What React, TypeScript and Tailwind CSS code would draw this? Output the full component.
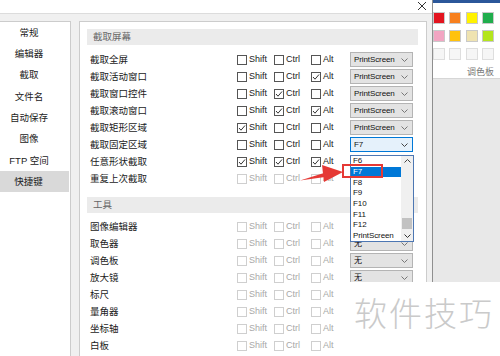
import React from 'react';

type Row = { label: string; checks: [boolean, boolean, boolean]; key: string; disabled?: boolean; focused?: boolean; hidden?: boolean };

const captureRows: Row[] = [
  { label: '截取全屏', checks: [false, false, false], key: 'PrintScreen' },
  { label: '截取活动窗口', checks: [false, false, true], key: 'PrintScreen' },
  { label: '截取窗口控件', checks: [false, true, false], key: 'PrintScreen' },
  { label: '截取滚动窗口', checks: [false, true, true], key: 'PrintScreen' },
  { label: '截取矩形区域', checks: [true, false, false], key: 'PrintScreen' },
  { label: '截取固定区域', checks: [false, false, false], key: 'F7', focused: true },
  // 下拉框被弹出列表挡住
  { label: '任意形状截取', checks: [true, true, true], key: '', hidden: true },
  { label: '重复上次截取', checks: [false, false, false], key: '', disabled: true, hidden: true },
];

const toolRows = ['图像编辑器', '取色器', '调色板', '放大镜', '标尺', '量角器', '坐标轴', '白板'];

const navItems = ['常规', '编辑器', '截取', '文件名', '自动保存', '图像', 'FTP 空间', '快捷键'];

const listItems = ['F6', 'F7', 'F8', 'F9', 'F10', 'F11', 'F12', 'PrintScreen'];

const swatches = [
  '#e3141f', '#f7801e', '#fff200', '#20ad4c',
  '#f2a5c2', '#ffc20e', '#efe3b1', '#b4e51d',
  '', '', '', '',
];

function Chevron({ up, color = '#666' }: { up?: boolean; color?: string }) {
  return (
    <svg width="7" height="4" viewBox="0 0 7 4" className="shrink-0">
      <polyline
        points={up ? '0.5,3.5 3.5,0.5 6.5,3.5' : '0.5,0.5 3.5,3.5 6.5,0.5'}
        fill="none"
        stroke={color}
        strokeWidth="1"
      />
    </svg>
  );
}

function Check({ checked, disabled, label, w }: { checked: boolean; disabled?: boolean; label: string; w: string }) {
  return (
    <div className={`${w} flex items-center gap-[2px]`}>
      <span
        className={`w-[10px] h-[10px] border bg-white flex items-center justify-center ${
          disabled ? 'border-[#cfcfcf]' : 'border-[#555]'
        }`}
      >
        {checked && (
          <svg width="8" height="8" viewBox="0 0 8 8">
            <polyline points="1,4 3,6.2 7,1.5" fill="none" stroke="#333" strokeWidth="1" />
          </svg>
        )}
      </span>
      <span className={`text-[9px] leading-none ${disabled ? 'text-[#a8a8a8]' : 'text-[#222]'}`}>{label}</span>
    </div>
  );
}

function Select({ value, focused, hidden }: { value: string; focused?: boolean; hidden?: boolean }) {
  if (hidden) return <div className="w-[63px] h-[15px]" />;
  return (
    <div
      className={`w-[63px] h-[15px] border flex items-center justify-between pl-[3px] pr-[4px] ${
        focused ? 'border-[#0078d7] bg-[#e5f1fb]' : 'border-[#b4b4b4] bg-[#e3e3e3]'
      }`}
    >
      <span className="text-[8px] tracking-[-0.1px] leading-none text-[#111]">{value}</span>
      <Chevron color={focused ? '#444' : '#777'} />
    </div>
  );
}

function HotkeyRow({ row }: { row: Row }) {
  return (
    <div className="h-[17px] flex items-center">
      <div className="w-[150px] pl-[3px] text-[9.5px] leading-none text-[#1a1a1a]">{row.label}</div>
      <Check w="w-[37px]" checked={row.checks[0]} disabled={row.disabled} label="Shift" />
      <Check w="w-[37px]" checked={row.checks[1]} disabled={row.disabled} label="Ctrl" />
      <Check w="w-[39px]" checked={row.checks[2]} disabled={row.disabled} label="Alt" />
      <Select value={row.key} focused={row.focused} hidden={row.hidden} />
    </div>
  );
}

function SectionTitle({ children }: { children: React.ReactNode }) {
  return (
    <div className="h-[16px] bg-[#ebebeb] pl-[6px] flex items-center text-[9.5px] leading-none text-[#666]">
      {children}
    </div>
  );
}

export default function App() {
  return (
    <div className="relative w-[500px] h-[356px] overflow-hidden flex bg-white font-['Liberation_Sans','Noto_Sans_CJK_SC',sans-serif]">
      {/* 设置对话框 */}
      <div className="w-[433px] flex flex-col bg-[#f0f0f0] border-r border-[#8f8f8f]">
        <div className="h-[14px] bg-white border-b border-[#dcdcdc] flex justify-end pr-[5px] pt-[1px]">
          <svg width="10" height="10" viewBox="0 0 10 10">
            <path d="M1 1 L9 9 M9 1 L1 9" stroke="#333" strokeWidth="1" />
          </svg>
        </div>
        <div className="flex flex-1 pt-[7px] pr-[5px]">
          <nav className="w-[71px] bg-white border-t border-r border-[#cccccc]">
            {navItems.map((n) => (
              <div
                key={n}
                className={`h-[21.3px] pr-[12px] flex items-center justify-center text-[9.5px] leading-none text-[#222] ${
                  n === '快捷键' ? 'bg-[#d9d9d9] mr-[1px]' : ''
                }`}
              >
                {n}
              </div>
            ))}
          </nav>
          <main className="ml-[8px] flex-1 bg-white border-t border-l border-r border-[#cccccc] pl-[7px] pr-[8px] pt-[7px]">
            <SectionTitle>截取屏幕</SectionTitle>
            <div className="mt-[6px]">
              {captureRows.map((r) => (
                <HotkeyRow key={r.label} row={r} />
              ))}
            </div>
            <div className="mt-[10px]">
              <SectionTitle>工具</SectionTitle>
            </div>
            <div className="mt-[5px]">
              {toolRows.map((t, i) => (
                <HotkeyRow
                  key={t}
                  row={{ label: t, checks: [false, false, false], key: '无', disabled: true, hidden: i === 0 || i > 3 }}
                />
              ))}
            </div>
          </main>
        </div>
      </div>

      {/* 右侧调色板窗口 */}
      <div className="flex-1 flex flex-col">
        <div className="h-[3px] bg-[#2b579a]" />
        <div className="h-[76px] bg-white border-b border-[#d6d6d6] pt-[9px] pr-[6px] flex flex-col">
          <div className="grid grid-cols-[12px_12px_12px_12px] gap-x-[4.3px] gap-y-[6px]">
            {swatches.map((c, i) => (
              <span
                key={i}
                className={`w-[12px] h-[12px] border ${c ? 'border-[#c9c9c9]' : 'border-[#dedede] bg-[#f6f6f6]'}`}
                style={c ? { backgroundColor: c } : undefined}
              />
            ))}
          </div>
          <div className="mt-[6px] self-end text-[9px] leading-[12px] text-[#777]">调色板</div>
        </div>
        <div className="flex-1 bg-[#e8e8e8]" />
      </div>

      {/* 下拉列表 */}
      <div className="absolute left-[350px] top-[155px] w-[64px] h-[87px] bg-white border border-[#4d77b3] flex">
        <div className="flex-1">
          {listItems.map((it) => (
            <div
              key={it}
              className={`h-[10.7px] pl-[2px] flex items-center text-[8px] tracking-[-0.1px] leading-none ${
                it === 'F7' ? 'bg-[#0078d7] text-white' : 'text-[#111]'
              }`}
            >
              {it}
            </div>
          ))}
        </div>
        <div className="w-[12px] bg-[#f0f0f0] flex flex-col items-center justify-between py-[3px]">
          <Chevron up color="#444" />
          <div className="w-[10px] h-[11px] bg-[#c2c2c2] mt-[50px]" />
          <Chevron color="#333" />
        </div>
      </div>

      {/* 红色标注 */}
      <div className="absolute left-[342px] top-[164px] w-[41px] h-[14px] border-2 border-[#e53935]" />
      <svg className="absolute left-[295px] top-[160px]" width="52" height="30" viewBox="0 0 52 30">
        <path d="M5 20.5 L29 13 L30 17 Z" fill="#e53935" />
        <polygon points="27,5 48,12 29,22" fill="#e53935" />
      </svg>

      {/* 水印 */}
      <div className="absolute left-[340px] top-[282px] right-0 bottom-0 bg-white pl-[14px] pt-[10px]">
        <div className="text-[33px] leading-[40px] tracking-[2px] text-[#cacaca] font-['Noto_Sans_CJK_SC',sans-serif] font-light">
          软件技巧
        </div>
      </div>
    </div>
  );
}
